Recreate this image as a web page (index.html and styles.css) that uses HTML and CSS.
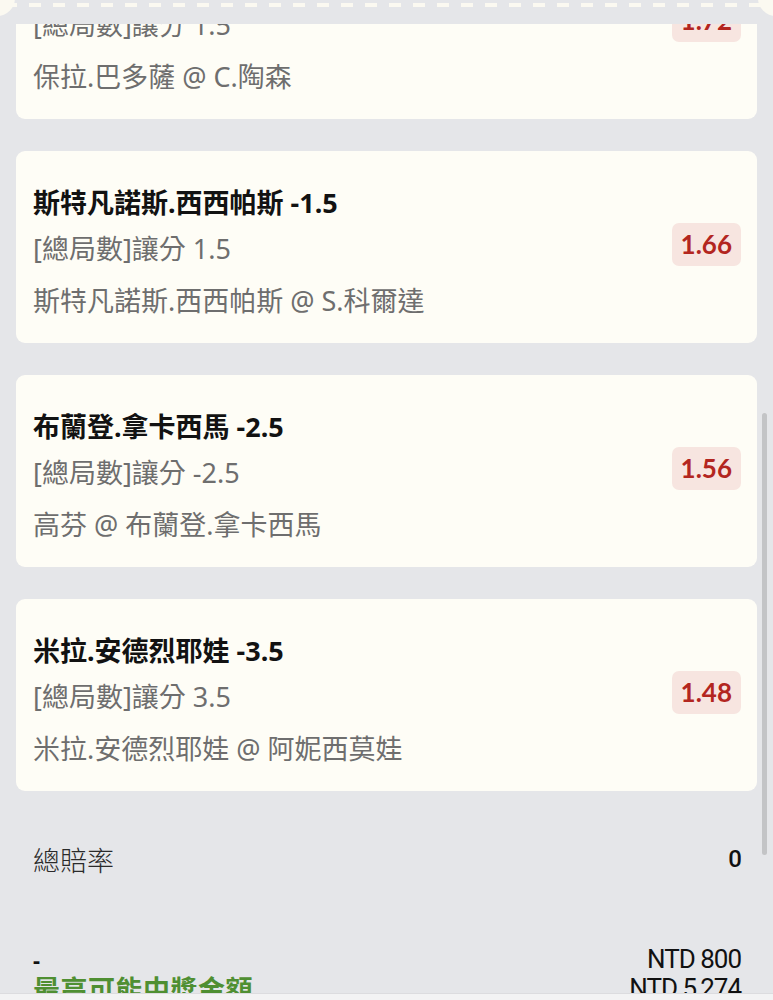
FILE: index.html
```html
<!DOCTYPE html>
<html lang="zh-Hant">
<head>
<meta charset="UTF-8" />
<meta name="viewport" content="width=device-width, initial-scale=1" />
<title>投注單</title>
<link rel="stylesheet" href="styles.css">
</head>
<body>
<div class="tear" aria-hidden="true"></div>

<main class="slip">
  <section class="bets">
    <article class="bet">
      <div class="bet-info">
        <div class="bet-title">保拉.巴多薩 -1.5</div>
        <div class="bet-line">[總局數]讓分 1.5</div>
        <div class="bet-line">保拉.巴多薩 @ C.陶森</div>
      </div>
      <div class="odds">1.72</div>
    </article>

    <article class="bet">
      <div class="bet-info">
        <div class="bet-title">斯特凡諾斯.西西帕斯 -1.5</div>
        <div class="bet-line">[總局數]讓分 1.5</div>
        <div class="bet-line">斯特凡諾斯.西西帕斯 @ S.科爾達</div>
      </div>
      <div class="odds">1.66</div>
    </article>

    <article class="bet">
      <div class="bet-info">
        <div class="bet-title">布蘭登.拿卡西馬 -2.5</div>
        <div class="bet-line">[總局數]讓分 -2.5</div>
        <div class="bet-line">高芬 @ 布蘭登.拿卡西馬</div>
      </div>
      <div class="odds">1.56</div>
    </article>

    <article class="bet">
      <div class="bet-info">
        <div class="bet-title">米拉.安德烈耶娃 -3.5</div>
        <div class="bet-line">[總局數]讓分 3.5</div>
        <div class="bet-line">米拉.安德烈耶娃 @ 阿妮西莫娃</div>
      </div>
      <div class="odds">1.48</div>
    </article>
  </section>

  <section class="summary">
    <div class="row total">
      <span class="label">總賠率</span>
      <span class="value">0</span>
    </div>
    <div class="row stake">
      <span class="label">-</span>
      <span class="value">NTD 800</span>
    </div>
    <div class="row payout">
      <span class="label">最高可能中獎金額</span>
      <span class="value">NTD 5,274</span>
    </div>
  </section>
</main>

<div class="scrollbar" aria-hidden="true"></div>
<footer class="bottom-bar"></footer>
</body>
</html>
```

FILE: styles.css
```css
:root {
  --page-bg: #e5e6e9;
  --card-bg: #fefdf6;
  --title-color: #121212;
  --line-color: #6e6e6e;
  --odds-bg: #f7e5e0;
  --odds-color: #b3261f;
  --green: #4f8f32;
}
* {
  box-sizing: border-box;
}
html, body {
  height: 100%;
}
body {
  margin: 0;
  background: var(--page-bg);
  font-family: "Noto Sans", "Noto Sans CJK TC", sans-serif;
  overflow: hidden;
}

/* torn ticket edge fixed at the top */
.tear {
  position: fixed;
  top: 0;
  left: 0;
  right: 0;
  height: 24px;
  background:
    repeating-linear-gradient(90deg, #fbf9f1 0 12px, transparent 12px 24px) 5px 3px / calc(100% - 10px) 4px no-repeat,
    var(--page-bg);
  z-index: 5;
}
.tear::before, .tear::after {
  content: "";
  position: absolute;
  top: -20px;
  width: 36px;
  height: 36px;
  border-radius: 50%;
  background: #fbf9f1;
}
.tear::before {
  left: -21px;
}
.tear::after {
  right: -21px;
}

.slip {
  padding: 0 16px;
  margin-top: -73px;
}
.bets {
  display: flex;
  flex-direction: column;
  gap: 32px;
}
.bet {
  background: var(--card-bg);
  border-radius: 9px;
  height: 192px;
  padding: 33px 16px 23px 17px;
  display: flex;
  align-items: center;
  justify-content: space-between;
}
.bet-info {
  align-self: flex-start;
}
.bet-title {
  font-size: 27px;
  font-weight: 700;
  line-height: 38px;
  color: var(--title-color);
}
.bet-line {
  font-size: 27px;
  line-height: 38px;
  color: var(--line-color);
  margin-top: 8px;
}
.bet-line + .bet-line {
  margin-top: 14px;
}
.odds {
  font-family: Lato, "Noto Sans", sans-serif;
  font-weight: 700;
  font-size: 26px;
  color: var(--odds-color);
  background: var(--odds-bg);
  border-radius: 7px;
  padding: 5px 9px 6px;
  line-height: 32px;
  margin-bottom: 15px;
}

.summary {
  padding: 48px 16px 0 17px;
}
.row {
  display: flex;
  justify-content: space-between;
  align-items: center;
}
.label {
  font-size: 27px;
  font-weight: 300;
  color: #2a2a2a;
}
.value {
  font-family: Roboto, "Liberation Sans", sans-serif;
  font-size: 26px;
  color: #111;
  letter-spacing: -1px;
}
.total {
  height: 40px;
}
.total .value {
  font-weight: 500;
  font-size: 24px;
}
.stake {
  margin-top: 65px;
  height: 30px;
}
.stake .label {
  font-weight: 700;
  font-size: 22px;
  line-height: 30px;
  color: #111;
}
.payout {
  height: 28px;
}
.payout .label {
  color: var(--green);
  font-weight: 700;
  letter-spacing: 0.5px;
}

.scrollbar {
  position: fixed;
  top: 413px;
  right: 6px;
  width: 5px;
  height: 442px;
  border-radius: 3px;
  background: #c3c4c6;
}
.bottom-bar {
  position: fixed;
  left: 0;
  right: 0;
  bottom: 0;
  height: 7px;
  background: #f3f3f4;
  border-top: 1px solid #dcdcdf;
}
```
